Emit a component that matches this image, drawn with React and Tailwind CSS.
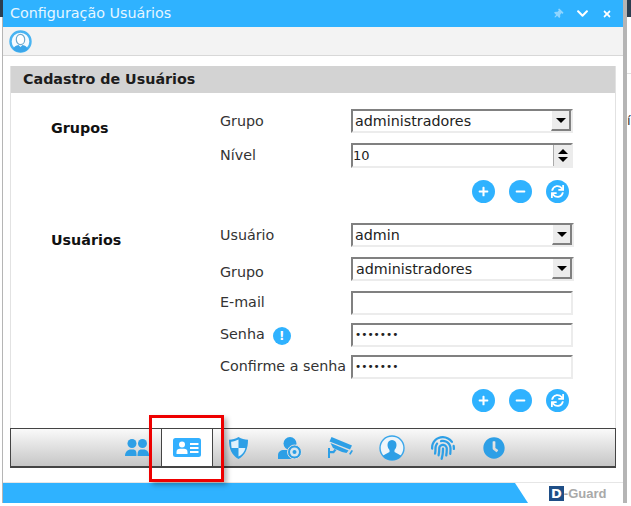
import React from "react";
import { FaFingerprint, FaClock, FaSync, FaPlus, FaMinus, FaThumbtack, FaChevronDown, FaTimes } from "react-icons/fa";

const font = { fontFamily: '"DejaVu Sans", Verdana, sans-serif' };

function ActionButtons({ className }) {
  return (
    <div className={`flex justify-end gap-[14px] pr-[46px] ${className}`}>
      {[FaPlus, FaMinus, FaSync].map((Icon, i) => (
        <button key={i} className="w-[23px] h-[23px] rounded-full bg-[#2fb2ff] text-white flex items-center justify-center">
          <Icon size={i === 2 ? 13 : 11} />
        </button>
      ))}
    </div>
  );
}

function Field({ label, value, type = "text", kind, h = "h-[24px]", className = "", extra, indent = "pl-[2px]", w = "w-[222px]", labelClass = "", inputClass = "text-[14.3px]" }) {
  return (
    <div className={`flex items-center ${h} ${className}`}>
      <div className={`w-[132px] shrink-0 pl-px flex items-center gap-[8px] text-[14.3px] text-[#333] ${labelClass}`}>
        {label}
        {extra}
      </div>
      <div className={`${w} h-full flex border-2 border-t-[#808080] border-l-[#808080] border-b-[#ececec] border-r-[#ececec] bg-white`}>
        <input
          readOnly
          type={type}
          value={value}
          className={`min-w-0 flex-1 text-[#222] outline-none ${indent} ${inputClass}`}
          style={font}
        />
        {kind === "select" && (
          <div className="w-[20px] bg-[#ececec] border-r-2 border-b-2 border-[#808080] border-l border-l-white flex items-center justify-center">
            <div className="w-0 h-0 border-x-[5px] border-x-transparent border-t-[5px] border-t-black" />
          </div>
        )}
        {kind === "spin" && (
          <div className="w-[18px] bg-[#ececec] border-l border-[#aaa] flex flex-col items-center justify-center gap-[3px]">
            <div className="w-0 h-0 border-x-[5px] border-x-transparent border-b-[5px] border-b-black" />
            <div className="w-0 h-0 border-x-[5px] border-x-transparent border-t-[5px] border-t-black" />
          </div>
        )}
      </div>
    </div>
  );
}

function UsersIcon() {
  return (
    <svg width="24" height="18" viewBox="0 0 24 18">
      <g fill="#2d9fe6">
        <circle cx="7" cy="4.500" r="4.500" />
        <circle cx="17.500" cy="4.500" r="4.500" />
        <path d="M0 17c0-4 2.500-6.500 6-6.500h2c3 0 3.500 2 3.500 6.500z" />
        <path d="M12.500 17c0-4.500 1-6.500 4-6.500h2c3.500 0 5.500 2.500 5.500 6.500z" />
      </g>
    </svg>
  );
}

function CardIcon() {
  return (
    <svg width="28" height="19" viewBox="0 0 28 19">
      <rect width="28" height="19" rx="2.500" fill="#33b0ff" />
      <circle cx="9" cy="6.500" r="3" fill="#fff" />
      <path d="M3.500 16v-2c0-2 1.500-3.200 3.500-3.200h4c2 0 3.500 1.200 3.500 3.200v2z" fill="#fff" />
      <path d="M17 5h8.500v2H17zM17 9h8.500v2H17zM17 13h8.500v2H17z" fill="#fff" />
    </svg>
  );
}

function ShieldIcon() {
  return (
    <svg width="19" height="22" viewBox="0 0 19 22">
      <path d="M9.500 0c3 1.800 6 2.700 9.500 2.700 0 9-2.500 15.300-9.500 19.300C2.500 18 0 11.700 0 2.700 3.500 2.700 6.500 1.800 9.500 0z" fill="#2d9fe6" />
      <path d="M9.500 2.500v8.500H2.600c-.3-2-.5-4-.5-6.300 2.600-.2 5-1 7.400-2.200z" fill="#dff1fc" />
      <path d="M9.500 11h6.900c-.9 3.800-3 6.900-6.900 8.500z" fill="#dff1fc" />
    </svg>
  );
}

function UserCamIcon() {
  return (
    <svg width="24" height="22" viewBox="0 0 24 22">
      <circle cx="12" cy="6.500" r="6.500" fill="#2d9fe6" />
      <path d="M0 22v-4c0-3 2.500-5 6-5h8v9z" fill="#2d9fe6" />
      <circle cx="16.500" cy="15" r="7" fill="#2d9fe6" stroke="#e0e0e0" strokeWidth="1" />
      <circle cx="16.500" cy="15" r="4.500" fill="#d8e6ef" />
      <circle cx="16.500" cy="15" r="2" fill="#2d9fe6" />
    </svg>
  );
}

function CctvIcon() {
  return (
    <svg width="25" height="21" viewBox="0 0 25 21">
      <path d="M3.500 0 L24 8.500 L22 12.500 L1.500 4.500z" fill="#2d9fe6" />
      <path d="M2.500 6 L20.500 13.500 L18.500 16 L14 15 L5 11z" fill="#2d9fe6" />
      <path d="M21 17l2.500-4 1.500.7-2.500 4z" fill="#2d9fe6" />
      <path d="M0 21V11h2v3h3l1.500-2 2 1-2.500 3.200H2V21z" fill="#2d9fe6" />
    </svg>
  );
}

function UserCircleIcon() {
  return (
    <svg width="26" height="26" viewBox="0 0 26 26">
      <circle cx="13" cy="13" r="12" fill="#eef5fa" stroke="#3aa6ea" strokeWidth="1.400" />
      <path
        d="M13 5c3 0 4.500 2.200 4.500 5 0 2-1 4-2 5v2l5.500 3c.5.300 1 .800 1.200 1.300A12 12 0 0 1 13 25a12 12 0 0 1-9.200-3.700c.2-.5.700-1 1.200-1.300l5.500-3v-2c-1-1-2-3-2-5 0-2.800 1.500-5 4.500-5z"
        fill="#2d9fe6"
      />
    </svg>
  );
}

function ToolbarUserIcon() {
  return (
    <svg width="23" height="23" viewBox="0 0 23 23">
      <circle cx="11.500" cy="11.500" r="10" fill="#f6fbff" stroke="#49b4f2" strokeWidth="2.400" />
      <ellipse cx="11.500" cy="9.500" rx="4.200" ry="5.200" fill="#fff" stroke="#6fa9cc" strokeWidth="1.200" />
      <path d="M4 19c1-2.500 3-3.500 5.500-4l2 2 2-2c2.500.5 4.500 1.500 5.500 4a10.500 10.500 0 0 1-15 0z" fill="#3aa6ea" />
    </svg>
  );
}

export default function App() {
  const tabs = [
    <UsersIcon />,
    <CardIcon />,
    <ShieldIcon />,
    <UserCamIcon />,
    <CctvIcon />,
    <UserCircleIcon />,
    <FaFingerprint size={24} color="#2d9fe6" />,
    <FaClock size={22} color="#2d9fe6" />,
  ];

  return (
    <div className="relative w-[631px] h-[506px] overflow-hidden bg-white" style={font}>
      {/* bits of the page behind the window */}
      <div className="absolute left-0 top-0 w-[3px] h-[17px] bg-[#2c3e50]" />
      <div className="absolute left-[627px] top-0 w-[4px] h-[17px] bg-[#2c3e50]" />
      <div className="absolute left-[627px] top-[73px] w-[4px] h-px bg-[#e0e0e0]" />
      <div className="absolute left-[627px] top-[111px] text-[13px] text-[#333]">í</div>

      <div className="ml-[2px] w-[625px] h-[503px] border-l border-l-[#b5b5b5] border-r-[4px] border-r-[#b5b5b5] flex flex-col">
        <div className="h-[27px] shrink-0 bg-[#2fb2ff] flex items-center justify-between pl-[7px] pr-[11px] text-white">
          <span className="pt-px text-[14.3px] text-[#e6f6ff]">Configuração Usuários</span>
          <div className="flex items-center gap-[13px]">
            <FaThumbtack size={10} className="text-[#8fd5ff] rotate-45" />
            <FaChevronDown size={13} />
            <FaTimes size={10} />
          </div>
        </div>

        <div className="h-[29px] shrink-0 bg-[#f3f3f3] border-b border-[#d8d8d8] flex items-center pl-[6px]">
          <ToolbarUserIcon />
        </div>

        <div className="mt-[10px] mx-[7px] w-[606px] h-[362px] border-x border-[#e2e2e2] flex flex-col shrink-0">
          <div className="h-[27px] shrink-0 bg-[#d3d3d3] pl-[12px] flex items-center text-[14.3px] font-bold text-[#1c1c1c]">
            Cadastro de Usuários
          </div>

          <div className="flex pt-[16px]">
            <div className="w-[208px] shrink-0 pl-[40px] pt-[9px] text-[14.3px] font-bold text-[#111]">Grupos</div>
            <div className="flex-1">
              <Field label="Grupo" value="administradores" kind="select" labelClass="pt-[2px]" inputClass="text-[14.3px] pt-px" />
              <Field label="Nível" value="10" kind="spin" h="h-[25px]" className="mt-[10px]" indent="pl-0" inputClass="text-[13px]" />
              <ActionButtons className="mt-[12px]" />
            </div>
          </div>

          <div className="flex mt-[20px]">
            <div className="w-[208px] shrink-0 pl-[40px] pt-[7px] text-[14.3px] font-bold text-[#111]">Usuários</div>
            <div className="flex-1">
              <Field label="Usuário" value="admin" kind="select" w="w-[223px]" labelClass="pt-[2px]" inputClass="text-[14.3px] pt-px" />
              <Field label="Grupo" value="administradores" kind="select" w="w-[223px]" className="mt-[10px]" indent="pl-[3px]" labelClass="pt-[7px]" inputClass="text-[14.3px] pt-[2px]" />
              <Field label="E-mail" value="" className="mt-[10px]" labelClass="-mt-px" />
              <Field
                label="Senha"
                value="1234567"
                type="password"
                className="mt-[8px]"
                labelClass="-mt-px"
                inputClass="text-[10.5px]"
                extra={
                  <span className="w-[18px] h-[18px] rounded-full bg-[#2fb2ff] text-white text-[12px] font-bold flex items-center justify-center mt-[2px]">!</span>
                }
              />
              <Field label="Confirme a senha" value="1234567" type="password" className="mt-[8px]" inputClass="text-[10.5px]" />
              <ActionButtons className="mt-[10px]" />
            </div>
          </div>
        </div>

        <div className="mx-[7px] w-[606px] h-[40px] shrink-0 border border-b-2 border-[#444] bg-gradient-to-b from-[#fafafa] to-[#c6c6c6] flex pl-[100px]">
          {tabs.map((icon, i) => (
            <div
              key={i}
              className={`flex items-center justify-center ${i === 1 ? "-ml-px w-[52px] bg-white border-x border-[#444]" : "w-[51px]"}`}
            >
              {icon}
            </div>
          ))}
        </div>

        <div className="relative mt-[14px] flex-1 border-t border-[#e6e6e6]">
          <div className="absolute inset-0 bg-[#2fb2ff] [clip-path:polygon(0_0,512px_0,525px_100%,0_100%)]" />
          <div className="absolute left-[546px] top-[3px] flex items-center text-[13px] font-bold leading-none text-[#a9a9a9]">
            <span className="bg-[#1f4e86] text-white px-[2px] py-px">D</span>
            <span style={{ fontFamily: '"Liberation Sans", sans-serif' }}>-Guard</span>
          </div>
        </div>
      </div>

      {/* highlight drawn over the active tab */}
      <div className="absolute left-[149px] top-[415px] w-[75px] h-[67px] border-[3px] border-[#ee0000] shadow-[3px_3px_5px_rgba(0,0,0,0.3)]" />
    </div>
  );
}
